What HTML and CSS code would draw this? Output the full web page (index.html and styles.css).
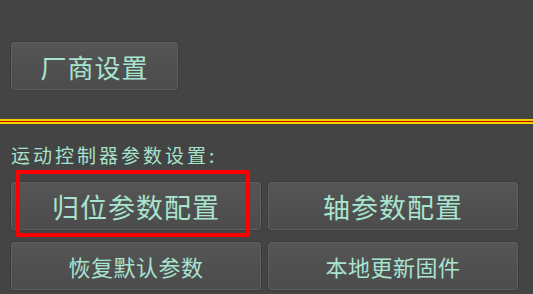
FILE: index.html
```html
<!DOCTYPE html>
<html lang="zh">
<head>
<meta charset="utf-8">
<link rel="stylesheet" href="styles.css">
</head>
<body>
<div class="page">
  <div class="top">
    <button class="btn btn-vendor">厂商设置</button>
  </div>
  <div class="divider"><span class="y"></span><span class="r"></span><span class="y"></span></div>
  <div class="label">运动控制器参数设置:</div>
  <div class="grid">
    <button class="btn btn-big highlighted">归位参数配置<span class="mark"></span></button>
    <button class="btn btn-big">轴参数配置</button>
    <button class="btn btn-small">恢复默认参数</button>
    <button class="btn btn-small">本地更新固件</button>
  </div>
</div>
</body>
</html>
```
FILE: styles.css
```css
html, body {
  margin: 0;
  padding: 0;
  background: #444444;
}
.page {
  width: 533px;
  height: 294px;
  overflow: hidden;
  font-family: "Noto Sans CJK SC", "Noto Sans", sans-serif;
  color: #a6e2cc;
}
.top {
  padding: 42px 0 0 11px;
  height: 119px;
  box-sizing: border-box;
}
.btn {
  font-family: inherit;
  color: #a8e4cf;
  background: linear-gradient(#555555, #4c4c4c);
  border: 1px solid #5f5f5f;
  border-radius: 3px;
  box-shadow: 0 0 0 1px #3c3c3c;
  padding: 0;
  margin: 0;
  display: flex;
  align-items: center;
  justify-content: center;
  box-sizing: border-box;
  position: relative;
}
.btn-vendor {
  width: 167px;
  height: 48px;
  font-size: 26px;
  letter-spacing: 1px;
}
.divider {
  display: flex;
  flex-direction: column;
}
.divider .y { height: 2px; background: #f5d000; }
.divider .r { height: 1px; background: #c00000; }
.label {
  padding: 19px 0 0 11px;
  height: 58px;
  box-sizing: border-box;
  font-size: 19px;
  letter-spacing: 3px;
  line-height: 24px;
}
.grid {
  display: grid;
  grid-template-columns: 250px 250px;
  grid-auto-rows: 48px;
  column-gap: 7px;
  row-gap: 12px;
  padding-left: 11px;
}
.btn-big {
  font-size: 27px;
  letter-spacing: 1px;
}
.btn-small {
  font-size: 22px;
  letter-spacing: 0.5px;
}
.mark {
  position: absolute;
  left: 4px;
  top: -13px;
  width: 234px;
  height: 67px;
  border: 4px solid #ff0000;
  box-sizing: border-box;
}
```
